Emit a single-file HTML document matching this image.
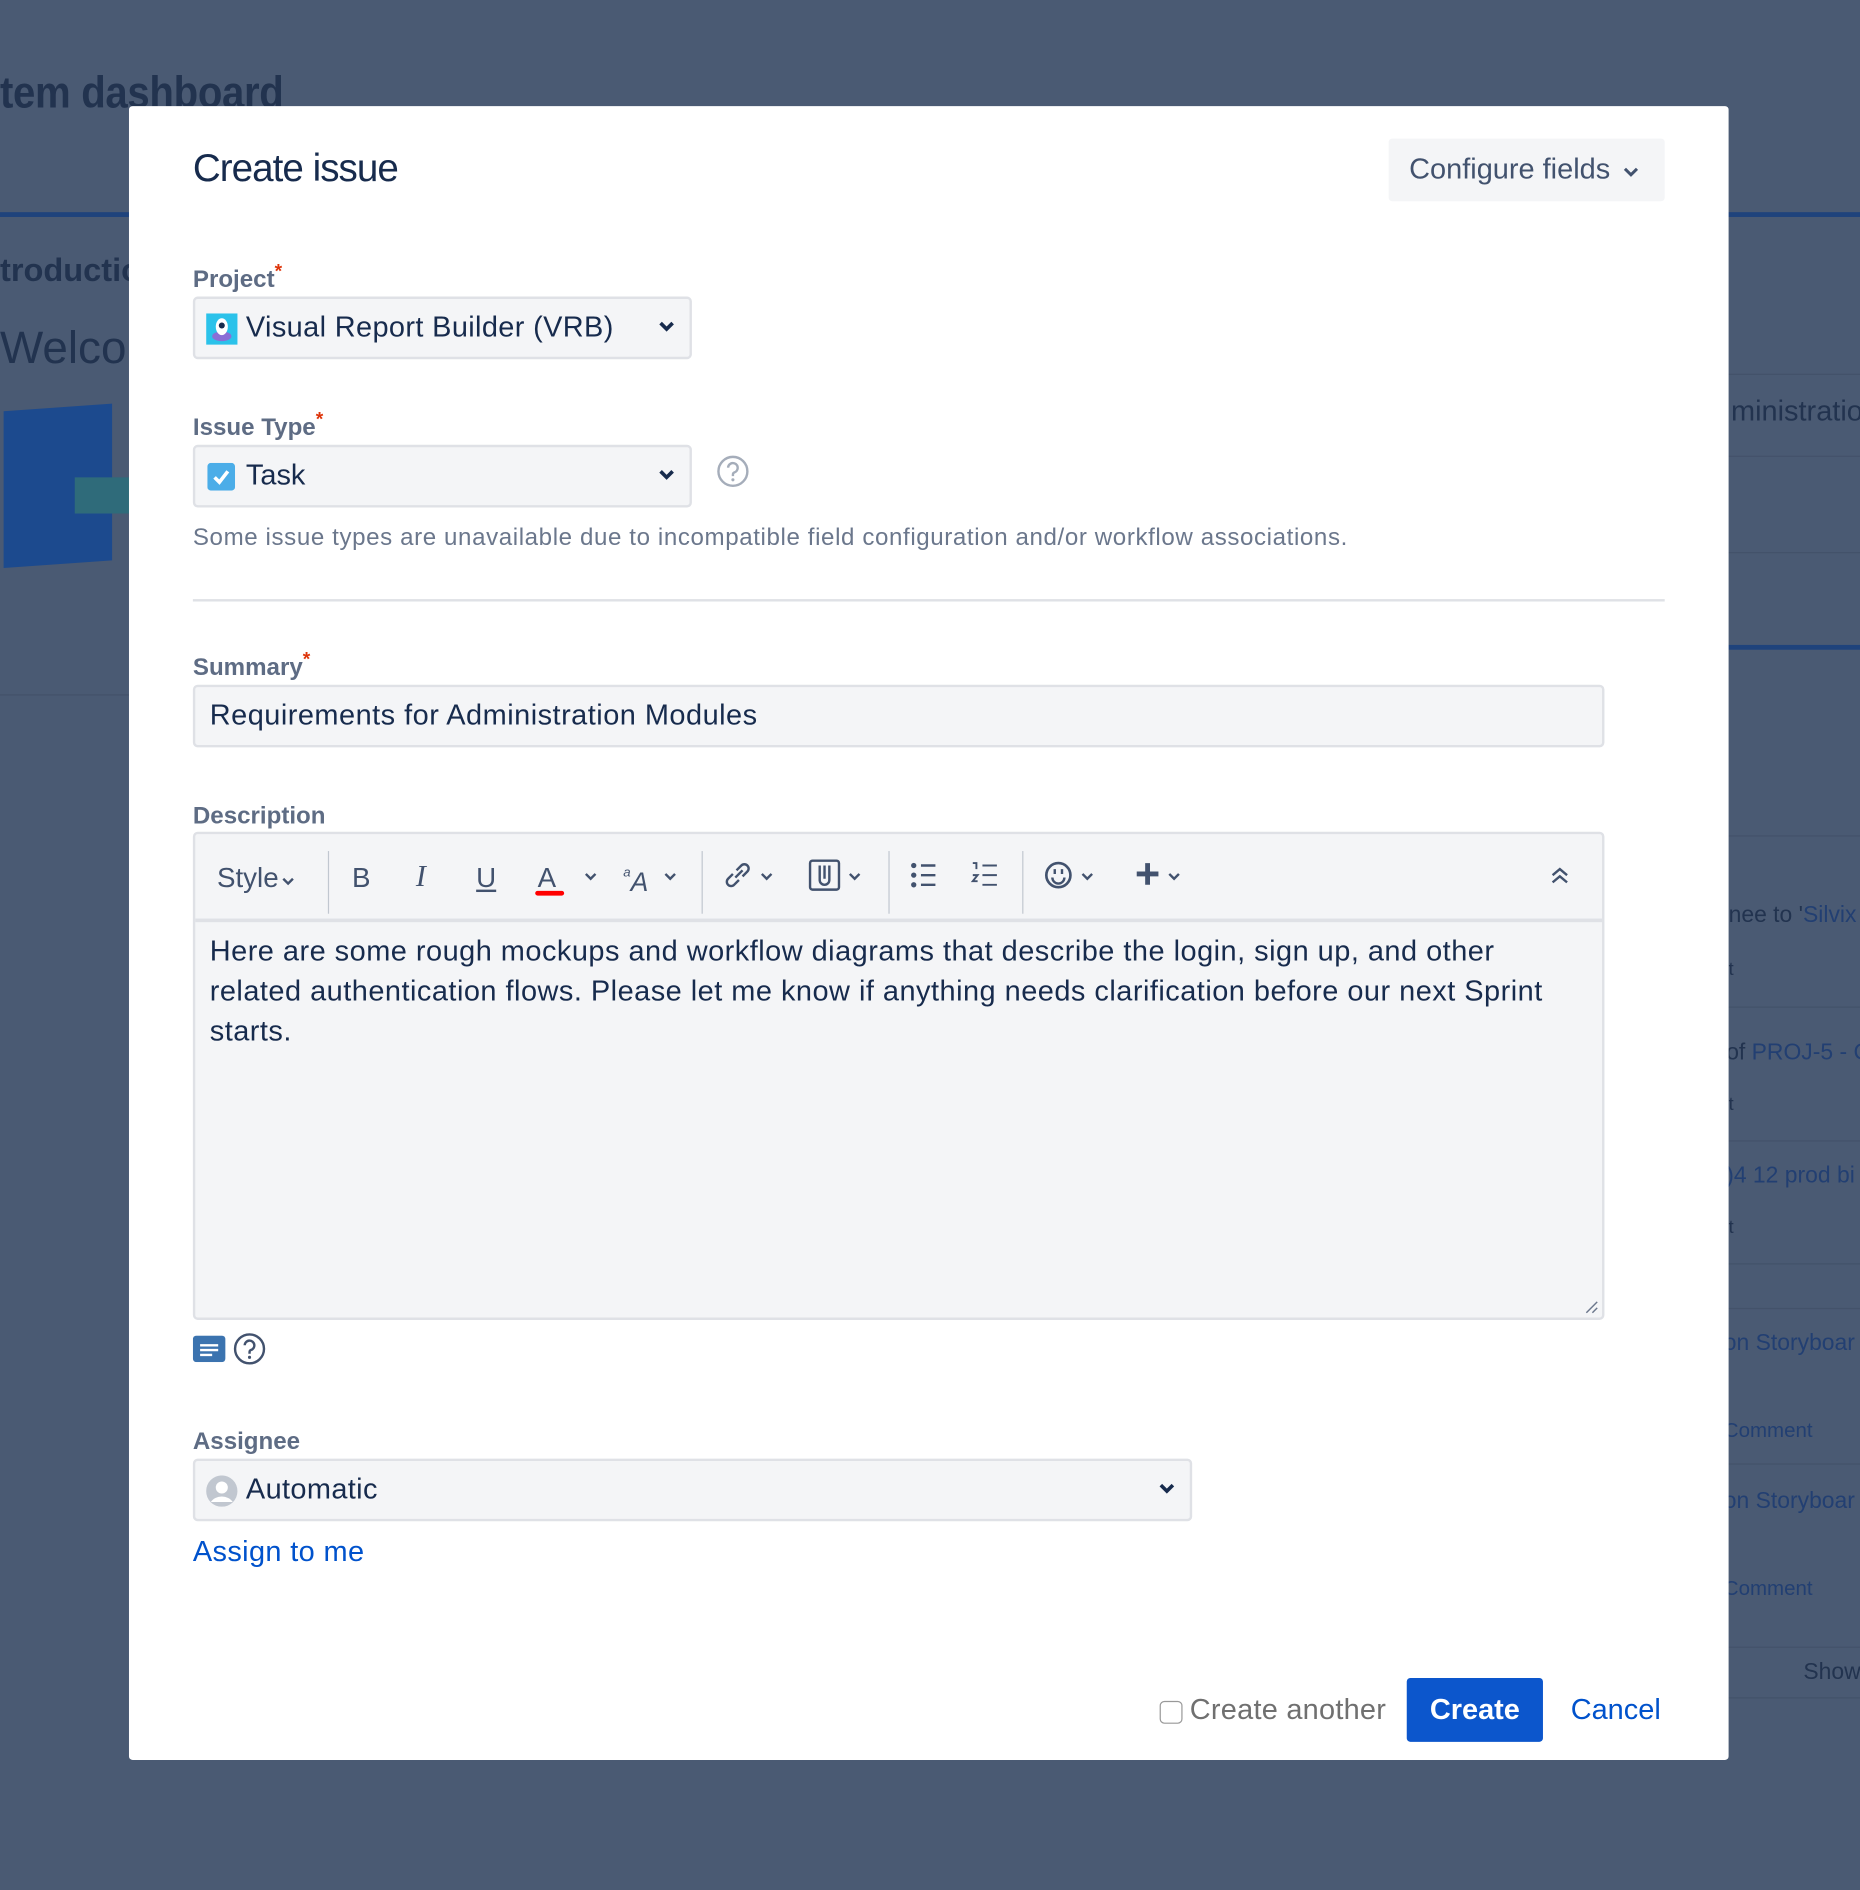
<!DOCTYPE html>
<html><head><meta charset="utf-8"><style>
*{box-sizing:border-box;margin:0;padding:0}
html,body{width:1860px;height:1890px;overflow:hidden;background:#4a5a73}
#w{position:absolute;left:0;top:0;width:1543px;height:1568px;transform:scale(1.20544);transform-origin:0 0;font-family:"Liberation Sans",Arial,sans-serif}
.a{position:absolute;white-space:nowrap}
.bg{color:#22334f}
.bl{color:#223f72}
.ln{position:absolute;left:1434px;width:120px;height:1px;background:#43526a}
.lbl{position:absolute;left:160px;font-size:20px;font-weight:bold;color:#5e6c84}
.lbl i{color:#de350b;font-style:normal;font-size:16px;position:relative;top:-8px}
.sel{position:absolute;left:160px;height:52px;background:#f4f5f7;border:2px solid #dfe1e6;border-radius:4px;font-size:24px;color:#172b4d;line-height:48px}
.chev{position:absolute;right:12px;top:17px}
.tb{position:absolute;top:0;height:72px;line-height:72px;color:#42526e;font-size:22px}
.sep{position:absolute;top:14px;width:1px;height:52px;background:#c1c7d0}
</style></head><body><div id="w">
<div class="a bg" style="left:0;top:56px;font-size:37px;letter-spacing:-0.3px;font-weight:bold;transform:scaleX(0.9);transform-origin:0 0">tem dashboard</div>
<div style="position:absolute;left:0;top:176px;width:1543px;height:4px;background:#1f437c"></div>
<div class="a bg" style="left:0;top:209px;font-size:27px;font-weight:bold">troductio</div>
<div class="a bg" style="left:0;top:268px;font-size:38px">Welcome</div>
<div style="position:absolute;left:3px;top:338px;width:90px;height:130px;background:#1c4a8e;transform:skewY(-4deg)"></div>
<div style="position:absolute;left:62px;top:396px;width:50px;height:30px;background:#2f6b7a"></div>
<div style="position:absolute;left:0;top:576px;width:110px;height:1px;background:#43526a"></div>
<div class="a bg" style="left:1436px;top:328px;font-size:24px">ministration</div>
<div class="ln" style="top:310px"></div><div class="ln" style="top:378px"></div><div class="ln" style="top:458px"></div>
<div style="position:absolute;left:1434px;top:535px;width:120px;height:4px;background:#1f437c"></div>
<div class="ln" style="top:693px"></div><div class="ln" style="top:835px"></div><div class="ln" style="top:946px"></div><div class="ln" style="top:1048px"></div><div class="ln" style="top:1085px"></div><div class="ln" style="top:1214px"></div><div class="ln" style="top:1366px"></div><div class="ln" style="top:1408px"></div>
<div class="a bg" style="left:1434px;top:749px;font-size:19px">nee to '<span class="bl">Silvix</span></div>
<div class="a bg" style="left:1434px;top:796px;font-size:15px">t</div>
<div class="a bg" style="left:1432px;top:863px;font-size:19px">of <span class="bl">PROJ-5 - C</span></div>
<div class="a bg" style="left:1434px;top:908px;font-size:15px">t</div>
<div class="a bl" style="left:1432px;top:965px;font-size:19px">)4 12 prod bi</div>
<div class="a bg" style="left:1434px;top:1010px;font-size:15px">t</div>
<div class="a bl" style="left:1430px;top:1104px;font-size:19px">on Storyboar</div>
<div class="a bl" style="left:1430px;top:1177px;font-size:17px">Comment</div>
<div class="a bl" style="left:1430px;top:1235px;font-size:19px">on Storyboar</div>
<div class="a bl" style="left:1430px;top:1308px;font-size:17px">Comment</div>
<div class="a bg" style="left:1496px;top:1377px;font-size:19px">Show</div>

<div style="position:absolute;left:107px;top:88px;width:1327px;height:1372px;background:#fff;border-radius:3px"></div>
<div class="a" style="left:160px;top:121px;font-size:32px;color:#172b4d;letter-spacing:-0.8px">Create issue</div>
<div style="position:absolute;left:1152px;top:115px;width:229px;height:52px;background:#f4f5f7;border-radius:3px;font-size:24px;color:#42526e;line-height:52px;padding-left:17px">Configure fields <svg width="14" height="10" viewBox="0 0 14 10" style="margin-left:4px"><path d="M2 2l5 5 5-5" stroke="#42526e" stroke-width="2.5" fill="none"/></svg></div>

<div class="lbl" style="top:221px">Project<i>*</i></div>
<div class="sel" style="top:246px;width:414px">
<svg style="position:absolute;left:9px;top:12px" width="26" height="26" viewBox="0 0 26 26"><rect width="26" height="26" fill="#2bc2ea"/><ellipse cx="13" cy="19" rx="8" ry="4" fill="#8a6ed6"/><ellipse cx="13" cy="11" rx="5" ry="7" fill="#fff"/><circle cx="13" cy="10" r="2.5" fill="#172b4d"/></svg>
<span style="position:absolute;left:42px;letter-spacing:0.3px">Visual Report Builder (VRB)</span>
<svg class="chev" width="14" height="12" viewBox="0 0 14 12"><path d="M2 3l5 5 5-5" stroke="#172b4d" stroke-width="3" fill="none"/></svg></div>

<div class="lbl" style="top:344px">Issue Type<i>*</i></div>
<div class="sel" style="top:369px;width:414px">
<svg style="position:absolute;left:10px;top:13px" width="23" height="23" viewBox="0 0 23 23"><rect width="23" height="23" rx="3" fill="#4bade8"/><path d="M6 12l4 4 7-9" stroke="#fff" stroke-width="3" fill="none"/></svg>
<span style="position:absolute;left:42px">Task</span>
<svg class="chev" width="14" height="12" viewBox="0 0 14 12"><path d="M2 3l5 5 5-5" stroke="#172b4d" stroke-width="3" fill="none"/></svg></div>
<svg style="position:absolute;left:594px;top:377px" width="28" height="28" viewBox="0 0 28 28"><circle cx="14" cy="14" r="12" stroke="#a5adba" stroke-width="2" fill="none"/><path d="M10 11a4 4 0 1 1 5 4c-1 .5-1 1-1 3" stroke="#a5adba" stroke-width="2" fill="none"/><circle cx="14" cy="21" r="1.3" fill="#a5adba"/></svg>
<div class="a" style="left:160px;top:435px;font-size:20px;color:#6b778c;letter-spacing:0.5px">Some issue types are unavailable due to incompatible field configuration and/or workflow associations.</div>
<div style="position:absolute;left:160px;top:497px;width:1221px;height:2px;background:#dfe1e6"></div>

<div class="lbl" style="top:543px">Summary<i>*</i></div>
<div class="sel" style="top:568px;width:1171px"><span style="position:absolute;left:12px;letter-spacing:0.4px">Requirements for Administration Modules</span></div>

<div class="lbl" style="top:666px">Description</div>
<div style="position:absolute;left:160px;top:690px;width:1171px;height:405px;background:#f4f5f7;border:2px solid #dfe1e6;border-radius:4px">
<div class="tb" style="left:18px;font-size:23px">Style<svg width="12" height="9" viewBox="0 0 12 9" style="margin-left:2px"><path d="M2 2l4 4 4-4" stroke="#42526e" stroke-width="2" fill="none"/></svg></div>
<div class="sep" style="left:110px"></div>
<div class="tb" style="left:130px;font-size:23px">B</div>
<div class="tb" style="left:183px;font-style:italic;font-family:'Liberation Serif',serif;font-size:25px">I</div>
<div class="tb" style="left:233px;text-decoration:underline;font-size:23px">U</div>
<div class="tb" style="left:284px;font-size:23px">A</div>
<div style="position:absolute;left:282px;top:47px;width:24px;height:4px;background:#ff0000;border-radius:2px"></div>
<svg style="position:absolute;left:322px;top:31px" width="12" height="9" viewBox="0 0 12 9"><path d="M2 2l4 4 4-4" stroke="#42526e" stroke-width="2" fill="none"/></svg>
<div class="tb" style="left:355px;font-style:italic;font-size:22px"><sup style="font-size:11px;position:relative;top:-4px">a</sup>A</div>
<svg style="position:absolute;left:388px;top:31px" width="12" height="9" viewBox="0 0 12 9"><path d="M2 2l4 4 4-4" stroke="#42526e" stroke-width="2" fill="none"/></svg>
<div class="sep" style="left:420px"></div>
<svg style="position:absolute;left:436px;top:20px" width="28" height="28" viewBox="0 0 28 28"><path d="M12 16l6-6M10 13l-4 4a3.5 3.5 0 0 0 5 5l4-4M18 15l4-4a3.5 3.5 0 0 0-5-5l-4 4" stroke="#42526e" stroke-width="2" fill="none"/></svg>
<svg style="position:absolute;left:468px;top:31px" width="12" height="9" viewBox="0 0 12 9"><path d="M2 2l4 4 4-4" stroke="#42526e" stroke-width="2" fill="none"/></svg>
<svg style="position:absolute;left:508px;top:20px" width="28" height="28" viewBox="0 0 28 28"><rect x="2" y="2" width="24" height="24" rx="2" stroke="#42526e" stroke-width="2" fill="none"/><path d="M10 6v12a4 4 0 0 0 8 0V6M14 6v11" stroke="#42526e" stroke-width="2" fill="none"/></svg>
<svg style="position:absolute;left:541px;top:31px" width="12" height="9" viewBox="0 0 12 9"><path d="M2 2l4 4 4-4" stroke="#42526e" stroke-width="2" fill="none"/></svg>
<div class="sep" style="left:575px"></div>
<svg style="position:absolute;left:592px;top:22px" width="26" height="24" viewBox="0 0 26 24"><circle cx="4" cy="4" r="2.2" fill="#42526e"/><circle cx="4" cy="12" r="2.2" fill="#42526e"/><circle cx="4" cy="20" r="2.2" fill="#42526e"/><path d="M10 4h12M10 12h12M10 20h12" stroke="#42526e" stroke-width="2"/></svg>
<svg style="position:absolute;left:643px;top:22px" width="26" height="24" viewBox="0 0 26 24"><path d="M2 2h3v5M2 12h4l-4 5h4M10 4h12M10 12h12M10 20h12" stroke="#42526e" stroke-width="1.6" fill="none"/></svg>
<div class="sep" style="left:686px"></div>
<svg style="position:absolute;left:702px;top:20px" width="28" height="28" viewBox="0 0 28 28"><circle cx="14" cy="14" r="10" stroke="#42526e" stroke-width="2.2" fill="none"/><path d="M11 9v4M17 9v4M9 16a5 5 0 0 0 10 0" stroke="#42526e" stroke-width="2" fill="none"/></svg>
<svg style="position:absolute;left:734px;top:31px" width="12" height="9" viewBox="0 0 12 9"><path d="M2 2l4 4 4-4" stroke="#42526e" stroke-width="2" fill="none"/></svg>
<svg style="position:absolute;left:779px;top:22px" width="22" height="22" viewBox="0 0 22 22"><path d="M11 2v18M2 11h18" stroke="#42526e" stroke-width="4"/></svg>
<svg style="position:absolute;left:806px;top:31px" width="12" height="9" viewBox="0 0 12 9"><path d="M2 2l4 4 4-4" stroke="#42526e" stroke-width="2" fill="none"/></svg>
<svg style="position:absolute;left:1124px;top:26px" width="16" height="16" viewBox="0 0 16 16"><path d="M2 8l6-5 6 5M2 14l6-5 6 5" stroke="#42526e" stroke-width="2" fill="none"/></svg>
<div style="position:absolute;left:0;top:70px;width:1167px;height:3px;background:#dfe1e6"></div>
<div style="position:absolute;left:12px;top:81px;width:1120px;font-size:24px;line-height:33px;color:#172b4d;letter-spacing:0.4px">Here are some rough mockups and workflow diagrams that describe the login, sign up, and other related authentication flows. Please let me know if anything needs clarification before our next Sprint starts.</div>
<svg style="position:absolute;right:3px;bottom:3px" width="12" height="12" viewBox="0 0 12 12"><path d="M11 2L2 11M11 7L7 11" stroke="#6b778c" stroke-width="1.2"/></svg>
</div>
<svg style="position:absolute;left:160px;top:1108px" width="27" height="22" viewBox="0 0 27 22"><rect width="27" height="22" rx="3" fill="#3b73af"/><path d="M6 8h15M6 12h15M6 16h10" stroke="#fff" stroke-width="2"/></svg>
<svg style="position:absolute;left:193px;top:1105px" width="28" height="28" viewBox="0 0 28 28"><circle cx="14" cy="14" r="12" stroke="#42526e" stroke-width="2" fill="none"/><path d="M10 11a4 4 0 1 1 5 4c-1 .5-1 1-1 3" stroke="#42526e" stroke-width="2" fill="none"/><circle cx="14" cy="21" r="1.3" fill="#42526e"/></svg>

<div class="lbl" style="top:1185px">Assignee</div>
<div class="sel" style="top:1210px;width:829px">
<svg style="position:absolute;left:9px;top:12px" width="26" height="26" viewBox="0 0 26 26"><circle cx="13" cy="13" r="13" fill="#c1c7d0"/><circle cx="13" cy="10" r="5" fill="#fff"/><path d="M4 22a10 8 0 0 1 18 0" fill="#fff"/></svg>
<span style="position:absolute;left:42px;letter-spacing:0.3px">Automatic</span>
<svg class="chev" width="14" height="12" viewBox="0 0 14 12"><path d="M2 3l5 5 5-5" stroke="#172b4d" stroke-width="3" fill="none"/></svg></div>
<div class="a" style="left:160px;top:1274px;font-size:24px;color:#0052cc;letter-spacing:0.3px">Assign to me</div>

<div style="position:absolute;left:962px;top:1411px;width:19px;height:19px;border:1px solid #999;border-radius:4px;background:#fff"></div>
<div class="a" style="left:987px;top:1405px;font-size:24px;color:#707070;letter-spacing:0.2px">Create another</div>
<div style="position:absolute;left:1167px;top:1392px;width:113px;height:53px;background:#0c56cc;border-radius:3px;color:#fff;font-size:24px;font-weight:bold;line-height:53px;text-align:center">Create</div>
<div class="a" style="left:1303px;top:1405px;font-size:24px;color:#0052cc">Cancel</div>
</div></body></html>
